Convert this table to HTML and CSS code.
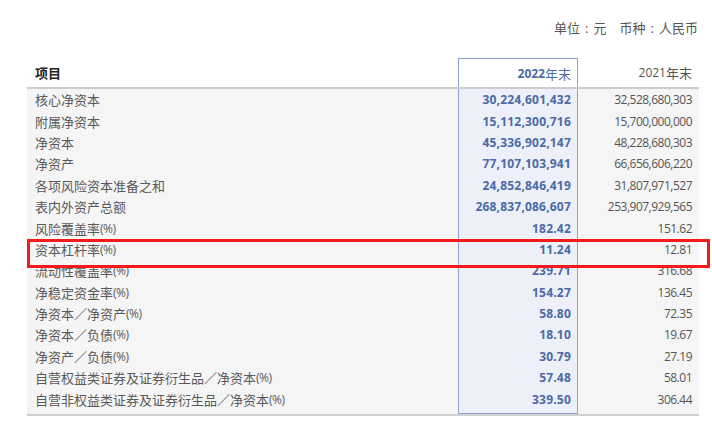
FILE: index.html
```html
<!DOCTYPE html>
<html lang="zh-CN">
<head>
<meta charset="utf-8">
<title>风险控制指标</title>
<link rel="stylesheet" href="styles.css">
</head>
<body>
<div class="page">
  <div class="unit"><span>单位<span class="colon">:</span>元</span><span class="gap"></span><span>币种<span class="colon">:</span>人民币</span></div>
  <div class="table">
    <div class="row head">
      <div class="cell label">项目</div>
      <div class="cell cur"><span class="num">2022</span>年末</div>
      <div class="cell prev"><span class="num">2021</span>年末</div>
    </div>
    <div class="tbody">
      <div class="row"><div class="cell label">核心净资本</div><div class="cell cur num">30,224,601,432</div><div class="cell prev num">32,528,680,303</div></div>
      <div class="row"><div class="cell label">附属净资本</div><div class="cell cur num">15,112,300,716</div><div class="cell prev num">15,700,000,000</div></div>
      <div class="row"><div class="cell label">净资本</div><div class="cell cur num">45,336,902,147</div><div class="cell prev num">48,228,680,303</div></div>
      <div class="row"><div class="cell label">净资产</div><div class="cell cur num">77,107,103,941</div><div class="cell prev num">66,656,606,220</div></div>
      <div class="row"><div class="cell label">各项风险资本准备之和</div><div class="cell cur num">24,852,846,419</div><div class="cell prev num">31,807,971,527</div></div>
      <div class="row"><div class="cell label">表内外资产总额</div><div class="cell cur num">268,837,086,607</div><div class="cell prev num">253,907,929,565</div></div>
      <div class="row"><div class="cell label">风险覆盖率<span class="pct">(%)</span></div><div class="cell cur num">182.42</div><div class="cell prev num">151.62</div></div>
      <div class="row"><div class="cell label">资本杠杆率<span class="pct">(%)</span></div><div class="cell cur num">11.24</div><div class="cell prev num">12.81</div></div>
      <div class="row"><div class="cell label">流动性覆盖率<span class="pct">(%)</span></div><div class="cell cur num">239.71</div><div class="cell prev num">316.68</div></div>
      <div class="row"><div class="cell label">净稳定资金率<span class="pct">(%)</span></div><div class="cell cur num">154.27</div><div class="cell prev num">136.45</div></div>
      <div class="row"><div class="cell label">净资本／净资产<span class="pct">(%)</span></div><div class="cell cur num">58.80</div><div class="cell prev num">72.35</div></div>
      <div class="row"><div class="cell label">净资本／负债<span class="pct">(%)</span></div><div class="cell cur num">18.10</div><div class="cell prev num">19.67</div></div>
      <div class="row"><div class="cell label">净资产／负债<span class="pct">(%)</span></div><div class="cell cur num">30.79</div><div class="cell prev num">27.19</div></div>
      <div class="row"><div class="cell label">自营权益类证券及证券衍生品／净资本<span class="pct">(%)</span></div><div class="cell cur num">57.48</div><div class="cell prev num">58.01</div></div>
      <div class="row last"><div class="cell label">自营非权益类证券及证券衍生品／净资本<span class="pct">(%)</span></div><div class="cell cur num">339.50</div><div class="cell prev num">306.44</div></div>
    </div>
  </div>
  <div class="mark"></div>
</div>
</body>
</html>
```
FILE: styles.css
```css
body {
  margin: 0;
  background: #fff;
  font-family: "Noto Sans CJK SC", sans-serif;
  color: #595959;
}
.page {
  position: relative;
  padding: 0 13px 0 27px;
}
.unit {
  height: 58px;
  box-sizing: border-box;
  padding: 19px 1px 0 0;
  display: flex;
  justify-content: flex-end;
  font-size: 13px;
  line-height: 18px;
  color: #555;
}
.unit .colon {
  font-family: "Open Sans", sans-serif;
  padding: 0 5px;
}
.unit .gap { width: 13px; }
.table { width: 672px; }
.row {
  display: grid;
  grid-template-columns: 431px 120px 121px;
  height: 21.4px;
  font-size: 13px;
}
.cell {
  display: flex;
  align-items: center;
  white-space: nowrap;
}
.label { padding-left: 8px; }
.cur {
  justify-content: flex-end;
  padding-right: 6px;
  border-left: 1px solid #8aa3cf;
  border-right: 1px solid #8aa3cf;
  background: #edf0f8;
  color: #4b6aa6;
  font-weight: 700;
}
.prev {
  justify-content: flex-end;
  padding-right: 7px;
  color: #555;
}
.num {
  font-family: "Open Sans", sans-serif;
  font-size: 12px;
  letter-spacing: -0.5px;
}
.cur.num { letter-spacing: 0.2px; }
.pct {
  font-family: "Open Sans", sans-serif;
  font-size: 12px;
  letter-spacing: -0.5px;
}
.head {
  height: 29px;
  border-bottom: 2px solid #cdcdcd;
}
.head .label { color: #222; font-weight: 700; }
.head .cur {
  background: #fff;
  border-top: 1px solid #8aa3cf;
  font-weight: 400;
}
.head .cur .num { font-weight: 700; letter-spacing: 0; }
.head .prev .num { letter-spacing: 0; }
.tbody {
  background: #f5f5f5;
  border-bottom: 2px solid #d0d0d0;
}
.row.last {
  height: 25.4px;
  box-sizing: border-box;
}
.row.last .cell { padding-bottom: 3px; }
.row.last .cur { border-bottom: 1px solid #8aa3cf; }
.mark {
  position: absolute;
  left: 27px;
  top: 239px;
  width: 683px;
  height: 29px;
  box-sizing: border-box;
  border: 3px solid #f21b1b;
}
```
